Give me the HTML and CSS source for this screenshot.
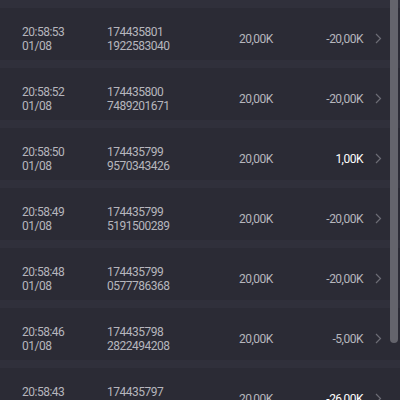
FILE: index.html
```html
<!DOCTYPE html>
<html>

<head>
    <title>Bet History</title>
    <link rel="stylesheet" href="styles.css">
</head>

<body>
    <div class="history">
        <div class="row">
            <div class="time">20:58:53<br>01/08</div>
            <div class="round">174435801<br>1922583040</div>
            <div class="bet">20,00K</div>
            <div class="win">-20,00K</div>
            <svg class="arrow" viewBox="0 0 7 11"><path d="M1 1 L5.5 5.5 L1 10" /></svg>
        </div>
        <div class="row">
            <div class="time">20:58:52<br>01/08</div>
            <div class="round">174435800<br>7489201671</div>
            <div class="bet">20,00K</div>
            <div class="win">-20,00K</div>
            <svg class="arrow" viewBox="0 0 7 11"><path d="M1 1 L5.5 5.5 L1 10" /></svg>
        </div>
        <div class="row">
            <div class="time">20:58:50<br>01/08</div>
            <div class="round">174435799<br>9570343426</div>
            <div class="bet">20,00K</div>
            <div class="win plus">1,00K</div>
            <svg class="arrow" viewBox="0 0 7 11"><path d="M1 1 L5.5 5.5 L1 10" /></svg>
        </div>
        <div class="row">
            <div class="time">20:58:49<br>01/08</div>
            <div class="round">174435799<br>5191500289</div>
            <div class="bet">20,00K</div>
            <div class="win">-20,00K</div>
            <svg class="arrow" viewBox="0 0 7 11"><path d="M1 1 L5.5 5.5 L1 10" /></svg>
        </div>
        <div class="row">
            <div class="time">20:58:48<br>01/08</div>
            <div class="round">174435799<br>0577786368</div>
            <div class="bet">20,00K</div>
            <div class="win">-20,00K</div>
            <svg class="arrow" viewBox="0 0 7 11"><path d="M1 1 L5.5 5.5 L1 10" /></svg>
        </div>
        <div class="row">
            <div class="time">20:58:46<br>01/08</div>
            <div class="round">174435798<br>2822494208</div>
            <div class="bet">20,00K</div>
            <div class="win">-5,00K</div>
            <svg class="arrow" viewBox="0 0 7 11"><path d="M1 1 L5.5 5.5 L1 10" /></svg>
        </div>
        <div class="row">
            <div class="time">20:58:43<br>01/08</div>
            <div class="round">174435797<br>3310846529</div>
            <div class="bet">20,00K</div>
            <div class="win plus">-26,00K</div>
            <svg class="arrow" viewBox="0 0 7 11"><path d="M1 1 L5.5 5.5 L1 10" /></svg>
        </div>
    </div>
    <div class="thumb"></div>
</body>

</html>
```
FILE: styles.css
```css
html,
body {
    height: 100%;
    overflow: hidden;
}

body {
    margin: 0;
    background-color: #2b2b35;
    font-family: Roboto, "Liberation Sans", sans-serif;
    font-size: 12px;
    line-height: 14px;
    letter-spacing: -0.5px;
    color: #b6b6bd;
}

.row {
    display: grid;
    grid-template-columns: 85px 132px 70px 54px 12px;
    align-items: center;
    height: 52px;
    padding: 0 0 0 22px;
    border-top: 8px solid #30303b;
}

.time,
.round {
    padding-top: 9px;
}

.bet,
.win {
    padding-top: 9px;
}

.win {
    text-align: right;
}

.plus {
    color: #ffffff;
}

.arrow {
    width: 7px;
    height: 11px;
    margin: 9px 0 0 12px;
    fill: none;
    stroke: #6c6c75;
    stroke-width: 1.2;
}

.thumb {
    position: absolute;
    top: 0;
    right: 2px;
    width: 8px;
    height: 343px;
    background-color: #64646c;
    border-radius: 0 0 4px 4px;
}
```
